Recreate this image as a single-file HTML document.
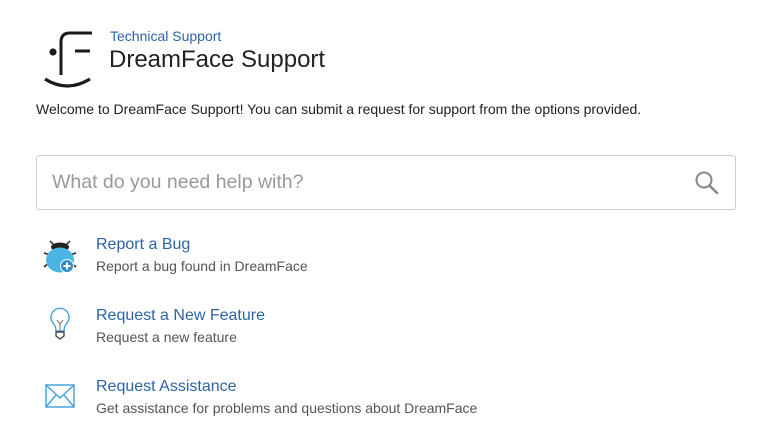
<!DOCTYPE html>
<html><head><meta charset="utf-8"><style>
body{margin:0;width:770px;height:448px;background:#fff;font-family:"Liberation Sans",Arial,sans-serif;position:relative;overflow:hidden}
.a{position:absolute;white-space:nowrap}
.t{color:#2d64a4;font-size:16px}
.d{color:#555;font-size:14px}
</style></head><body>
<svg class="a" style="left:0;top:0" width="110" height="100">
<circle cx="53" cy="52" r="3.6" fill="#1a1a1a"/>
<path d="M61 75 V42 Q61 33 70 33 H92" fill="none" stroke="#1a1a1a" stroke-width="3"/>
<path d="M75 51 H90" stroke="#1a1a1a" stroke-width="3"/>
<path d="M45 79 Q67 93 90 79" fill="none" stroke="#1a1a1a" stroke-width="3.2"/>
</svg>
<div class="a" style="left:110px;top:28px;font-size:14px;color:#2d64a4">Technical Support</div>
<div class="a" style="left:109px;top:46px;font-size:24px;color:#222">DreamFace Support</div>
<div class="a" style="left:36px;top:101px;font-size:14px;color:#222">Welcome to DreamFace Support! You can submit a request for support from the options provided.</div>
<div class="a" style="left:36px;top:155px;width:698px;height:53px;border:1px solid #ccc;border-radius:3px"></div>
<div class="a" style="left:52px;top:171px;font-size:19.5px;color:#999">What do you need help with?</div>
<svg class="a" style="left:694px;top:170px" width="26" height="26"><circle cx="10" cy="10" r="7.5" fill="none" stroke="#888" stroke-width="2"/><path d="M15.5 15.5 L23 23" stroke="#888" stroke-width="2.6" stroke-linecap="round"/></svg>
<svg class="a" style="left:40px;top:235px" width="40" height="40">
<path d="M10 6 L15 11 M30 6 L25 11 M4 18 L10 20 M36 18 L30 20 M4 32 L9 28 M36 32 L31 28" stroke="#222" stroke-width="1.5"/>
<ellipse cx="20" cy="12" rx="9" ry="4.5" fill="#222"/>
<ellipse cx="20" cy="25" rx="14" ry="12.5" fill="#4bb6e4"/>
<circle cx="27" cy="31" r="6.5" fill="#2f8fc8" stroke="#fff" stroke-width="1"/>
<path d="M27 27.5 V34.5 M23.5 31 H30.5" stroke="#fff" stroke-width="2"/>
</svg>
<div class="a t" style="left:96px;top:236px">Report a Bug</div>
<div class="a d" style="left:96px;top:258px">Report a bug found in DreamFace</div>
<svg class="a" style="left:46px;top:306px" width="30" height="36">
<path d="M10 25 Q10 20 7 17 A9 9 0 1 1 21 17 Q18 20 18 25 Z" fill="none" stroke="#4aa3dd" stroke-width="1.4"/>
<path d="M11 14 L14 18 L17 14 M14 18 V25" fill="none" stroke="#888" stroke-width="1.2"/>
<path d="M10 26 H18 V30 L14 33 L10 30 Z" fill="none" stroke="#444" stroke-width="1.4"/>
</svg>
<div class="a t" style="left:96px;top:307px">Request a New Feature</div>
<div class="a d" style="left:96px;top:329px">Request a new feature</div>
<svg class="a" style="left:44px;top:383px" width="32" height="28">
<rect x="2" y="2" width="28" height="22" fill="none" stroke="#4aa3dd" stroke-width="1.5"/>
<path d="M2 2 L16 15 L30 2 M2 24 L12 12 M30 24 L20 12" fill="none" stroke="#4aa3dd" stroke-width="1.5"/>
</svg>
<div class="a t" style="left:96px;top:378px">Request Assistance</div>
<div class="a d" style="left:96px;top:400px">Get assistance for problems and questions about DreamFace</div>
</body></html>
